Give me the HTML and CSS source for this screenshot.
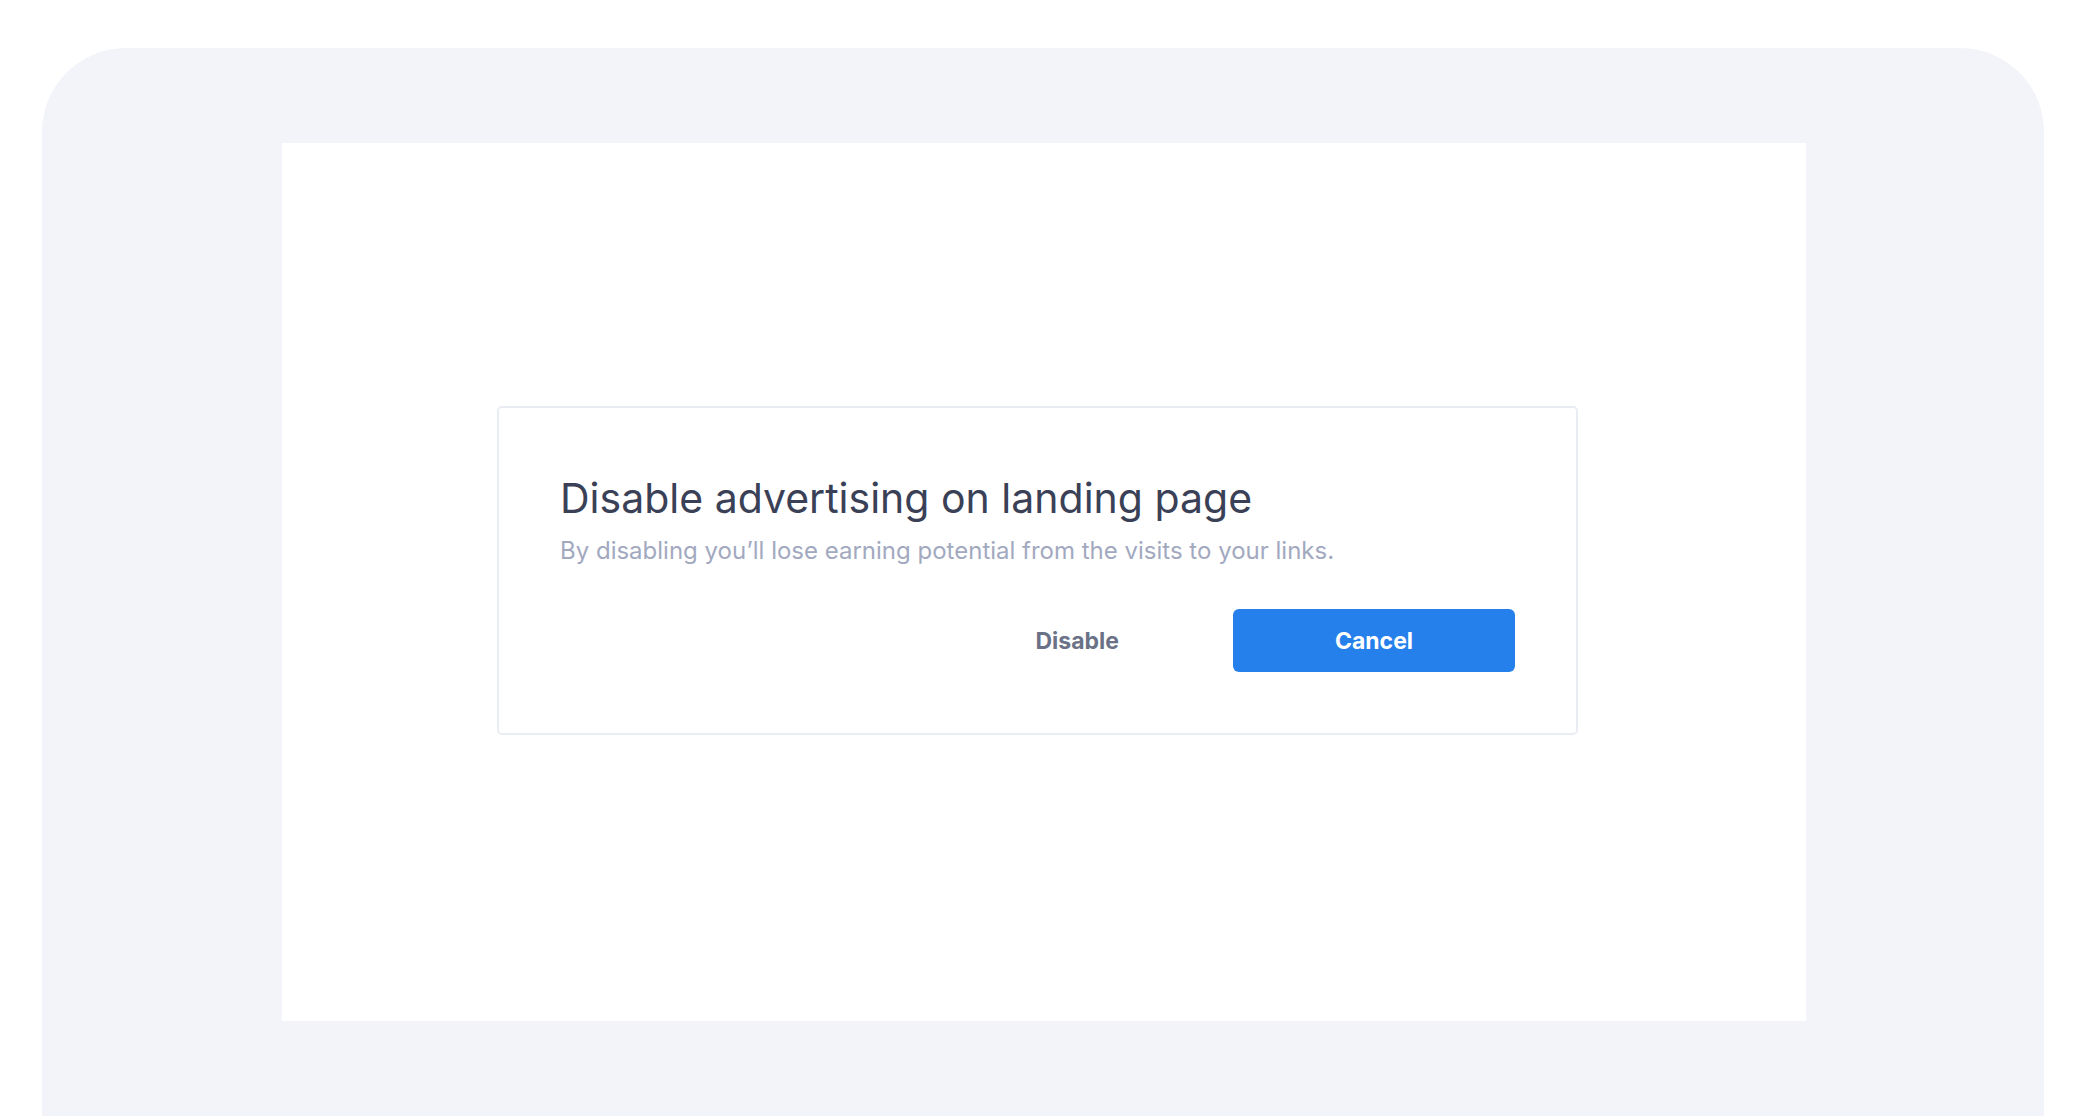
FILE: index.html
```html
<!DOCTYPE html>
<html lang="en">
<head>
    <meta charset="UTF-8">
    <meta name="viewport" content="width=device-width, initial-scale=1.0">
    <title>Disable advertising</title>
    <link rel="stylesheet" href="styles.css">
</head>
<body>
    <div class="frame">
        <div class="screen">
            <div class="dialog">
                <h1 class="dialog-title">Disable advertising on landing page</h1>
                <p class="dialog-text">By disabling you’ll lose earning potential from the visits to your links.</p>
                <div class="dialog-actions">
                    <button class="btn btn-plain">Disable</button>
                    <button class="btn btn-primary">Cancel</button>
                </div>
            </div>
        </div>
    </div>
</body>
</html>
```

FILE: styles.css
```css
body {
    font-family: Inter, "Noto Sans", sans-serif;
    margin: 0;
    background-color: #ffffff;
}

.frame {
    margin: 48px 48px 0 42px;
    height: 1068px;
    padding: 95px 238px 0 240px;
    box-sizing: border-box;
    background-color: #f3f4f9;
    border-radius: 84px 84px 0 0;
}

.screen {
    height: 878px;
    padding: 263px 228px 0 215px;
    box-sizing: border-box;
    background-color: #ffffff;
}

.dialog {
    height: 329px;
    box-sizing: border-box;
    padding: 65px 61px 0 61px;
    border: 2px solid #eaecf3;
    border-radius: 5px;
}

.dialog-title {
    margin: 0;
    font-size: 41px;
    font-weight: 400;
    line-height: 50px;
    color: #3a4157;
}

.dialog-text {
    margin: 13px 0 0;
    font-size: 24px;
    line-height: 30px;
    color: #a2a9bf;
}

.dialog-actions {
    display: flex;
    justify-content: flex-end;
    align-items: center;
    gap: 74px;
    margin-top: 43px;
}

.btn {
    font-family: inherit;
    font-size: 23px;
    font-weight: 700;
    border: none;
    border-radius: 6px;
    height: 63px;
    cursor: pointer;
}

.btn-plain {
    padding: 0 40px;
    background: none;
    color: #6b7287;
}

.btn-primary {
    width: 282px;
    background-color: #2680eb;
    color: #ffffff;
}
```
